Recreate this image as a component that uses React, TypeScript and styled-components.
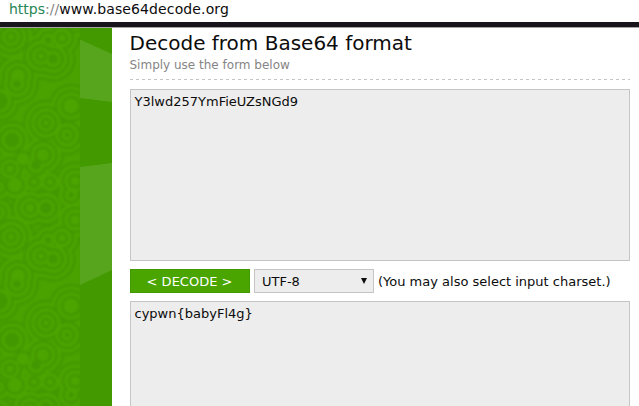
import React from "react";
import styled, { createGlobalStyle } from "styled-components";

const GlobalStyle = createGlobalStyle`
  * { box-sizing: border-box; }
  html, body { margin: 0; padding: 0; overflow: hidden; background: #fff; }
  body { font-family: "DejaVu Sans", sans-serif; font-size: 13px; color: #0c0c0c; }
`;

const Window = styled.div`
  display: flex;
  flex-direction: column;
  width: 639px;
  height: 406px;
  overflow: hidden;
`;

const AddressBar = styled.header`
  height: 22px;
  flex: none;
  padding-left: 9px;
  font-size: 14px;
  line-height: 18px;
  white-space: pre;
`;

const UrlPart = styled.span<{ $tone: string; $tracking?: number }>`
  color: ${(p) => p.$tone};
  letter-spacing: ${(p) => p.$tracking ?? 0}px;
`;

const Divider = styled.div`
  height: 6px;
  flex: none;
  background: #17151b;
  border-bottom: 1px solid #a5a5a5;
`;

const Page = styled.div`
  display: flex;
  flex: 1;
  min-height: 0;
`;

const Sidebar = styled.aside`
  display: flex;
  flex: none;
  width: 112px;
  background: #439a00;
  svg { display: block; flex: none; }
`;

const Content = styled.main`
  flex: none;
  width: 518px;
  padding: 3px 0 0 18px;
`;

const Title = styled.h1`
  margin: 0 0 0 -0.5px;
  font-size: 20px;
  font-weight: 400;
  line-height: 25px;
  white-space: nowrap;
`;

const Subtitle = styled.p`
  margin: 0 0 0 -0.5px;
  height: 23px;
  font-size: 12px;
  line-height: 18px;
  color: #858585;
`;

const DashedRule = styled.div`
  height: 1px;
  background: repeating-linear-gradient(90deg, #c4c4c4 0 3px, transparent 3px 6px);
`;

const TextBox = styled.div<{ $height: number; $top: number }>`
  height: ${(p) => p.$height}px;
  margin-top: ${(p) => p.$top}px;
  padding: 4px 3.5px;
  border: 1px solid #c5c5c8;
  background: #ededed;
  line-height: 15px;
`;

const Controls = styled.div`
  display: flex;
  gap: 4px;
  height: 24px;
  margin-top: 8px;
  line-height: 26px;
  white-space: nowrap;
`;

const DecodeButton = styled.button`
  width: 120px;
  padding: 2px 1px 0 0;
  border: 1px solid #429900;
  background: #4aa500;
  color: #fff;
  font: inherit;
  line-height: 20px;
`;

const CharsetSelect = styled.div`
  display: flex;
  align-items: center;
  justify-content: space-between;
  width: 120px;
  padding: 0 6px 0 7px;
  border: 1px solid #c5c5c8;
  background: #ededed;
`;

const CharsetName = styled.span`
  padding-top: 2px;
  line-height: 22px;
`;

/** Core radius, and how many nested bands surround it; even counts end in a light core. */
type Blob = [x: number, y: number, core: number, bands: number];

const blobs: Blob[] = [
  [11, 9, 3, 8], [48, 12, 3.5, 5], [62, 10, 3.5, 6], [41, 28, 3, 8], [53, 31, 5, 7],
  [18, 48, 7, 6], [17, 56, 4, 7], [-1, 73, 9, 5], [71, 78, 7.5, 6], [46, 95, 2.5, 8],
  [67, 107, 2.5, 7], [12, 112, 7.5, 5], [23, 131, 6, 4], [10, 141, 3.5, 6],
  [43, 127, 6, 6], [36, 137, 5, 5], [15, 157, 7, 4], [34, 154, 3, 4], [50, 154, 3, 4],
  [-2, 159, 3, 5], [75, 153, 4.5, 6], [71, 167, 3, 5], [30, 180, 4, 6],
  [46, 180, 6, 5], [75, 192, 4.5, 6], [-2, 185, 4, 5],
];

const PITCH = 3;
const layers = [0, 1, 2, 3, 4, 5, 6, 7];

const RingPattern = () => (
  <svg width="80" height="378" aria-hidden="true">
    <defs>
      <filter id="soften" x="0" y="0" width="1" height="1"><feGaussianBlur stdDeviation="0.9" /></filter>
      <pattern id="rings" width="80" height="200" patternUnits="userSpaceOnUse">
        <rect width="80" height="200" fill="#4aa202" />
        {layers.map((layer) =>
          [-200, 0, 200].map((shift) =>
            blobs
              .filter(([, , , bands]) => layer < bands)
              .map(([x, y, core, bands]) => (
                <circle
                  key={`${layer}:${shift}:${x}:${y}`}
                  cx={x}
                  cy={y + shift}
                  r={core + PITCH * (bands - 1 - layer)}
                  fill={layer % 2 ? "#4ba402" : "#429800"}
                />
              ))
          )
        )}
      </pattern>
    </defs>
    <rect width="80" height="378" fill="#469d01" />
    <rect width="80" height="378" fill="url(#rings)" filter="url(#soften)" />
  </svg>
);

const Rays = () => (
  <svg width="32" height="378" aria-hidden="true">
    <path d="M0 11.5 32 26V74L0 70Z" fill="#57a51c" />
    <path d="M0 139 32 135V242L0 257Z" fill="#57a51c" />
  </svg>
);

export default function App() {
  return (
    <Window>
      <GlobalStyle />
      <AddressBar>
        <UrlPart $tone="#278556">https</UrlPart>
        <UrlPart $tone="#858585">://</UrlPart>
        <UrlPart $tone="#0c0c0c" $tracking={0.12}>www.base64decode.org</UrlPart>
      </AddressBar>
      <Divider />
      <Page>
        <Sidebar>
          <RingPattern />
          <Rays />
        </Sidebar>
        <Content>
          <Title>Decode from Base64 format</Title>
          <Subtitle>Simply use the form below</Subtitle>
          <DashedRule />
          <TextBox $height={172} $top={9}>Y3lwd257YmFieUZsNGd9</TextBox>
          <Controls>
            <DecodeButton>&lt; DECODE &gt;</DecodeButton>
            <CharsetSelect>
              <CharsetName>UTF-8</CharsetName>
              <svg width="6" height="6" aria-hidden="true"><path d="M0 0H6L3 6Z" fill="#0c0c0c" /></svg>
            </CharsetSelect>
            <span>(You may also select input charset.)</span>
          </Controls>
          <TextBox $height={120} $top={8}>cypwn{"{babyFl4g}"}</TextBox>
        </Content>
      </Page>
    </Window>
  );
}
